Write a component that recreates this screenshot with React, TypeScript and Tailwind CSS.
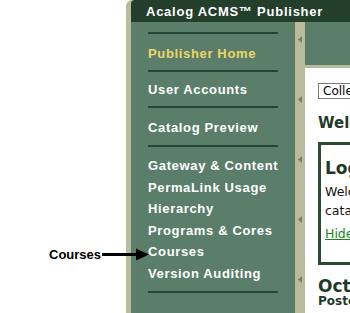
const navSans = { fontFamily: '"Liberation Sans", Arial, sans-serif' };
const verdana = { fontFamily: '"DejaVu Sans", Verdana, sans-serif' };

function Divider() {
  return <div className="ml-[17px] h-[2px] w-[130px] bg-[#27462f]" />;
}

function Notch() {
  return (
    <svg width="4" height="7" viewBox="0 0 4 7" aria-hidden="true" className="ml-[3px] shrink-0">
      <path d="M4 0 L0 3.5 L4 7Z" fill="#6e8069" />
    </svg>
  );
}

export default function App() {
  const group = ['Gateway & Content', 'PermaLink Usage', 'Hierarchy', 'Programs & Cores', 'Courses', 'Version Auditing'];

  return (
    <div className="relative flex h-[313px] w-[350px] overflow-hidden bg-white">
      {/* left margin of the screenshot (callout lives here) */}
      <div className="w-[126px] shrink-0" />

      {/* ACMS frame */}
      <div className="flex flex-1 flex-col rounded-tl-[6px] bg-[#b9bb9c] pl-[5px]">
        <div
          className="flex h-[22px] shrink-0 items-center rounded-tl-[4px] bg-[#233f2c] pt-[1px] pl-[15px] text-[13px] font-bold tracking-[0.75px] whitespace-nowrap text-white"
          style={navSans}
        >
          Acalog ACMS™ Publisher
        </div>

        <div className="flex flex-1">
          {/* Sidebar */}
          <nav className="w-[164px] shrink-0 bg-[#5a7e6a] pt-[10px] text-[13px] font-bold tracking-[0.65px] whitespace-nowrap text-white" style={navSans}>
            <Divider />
            <div className="flex h-[36px] items-center pt-[3px] pl-[17px] text-[#ecd667]">Publisher Home</div>
            <Divider />
            <div className="flex h-[34px] items-center pt-[2px] pl-[17px]">User Accounts</div>
            <Divider />
            <div className="flex h-[37px] items-center pt-[2px] pl-[17px]">Catalog Preview</div>
            <Divider />
            <ul className="pt-[8px] pb-[6px] pl-[17px] leading-[21.6px]">
              {group.map((g) => (
                <li key={g}>{g}</li>
              ))}
            </ul>
            <Divider />
          </nav>

          {/* collapse strip */}
          <div className="flex w-[10px] shrink-0 flex-col gap-[53px] pt-[14px]">
            <Notch />
            <Notch />
            <Notch />
            <Notch />
            <Notch />
          </div>

          {/* Content */}
          <div className="flex flex-1 flex-col">
            <div className="h-[43px] shrink-0 bg-[#5a7e6a]" />
            <div className="mt-[3px] flex-1 bg-white pl-[13px]" style={verdana}>
              <div className="w-[300px]">
                <div className="mt-[15px] flex h-[16px] w-[200px] items-center border border-[#7a7a7a] pl-[4px] text-[12px] leading-none text-black">
                  College Catalog
                </div>
                <h2 className="mt-[14px] text-[15px] leading-[20px] font-bold text-[#1f3a2a]">Welcome</h2>
                <div className="mt-[9px] border-[3px] border-[#2b4a35] px-[4px] pt-[12px] pb-[19px]">
                  <h3 className="text-[17px] leading-[22px] font-bold text-[#1f3a2a]">Login</h3>
                  <p className="mt-[3px] text-[12.5px] leading-[19px] text-[#111]">
                    Welcome to the
                    <br />
                    catalog management
                  </p>
                  <a className="mt-[4px] block text-[12.5px] leading-[19px] text-[#168a16] underline">Hide this</a>
                </div>
                <h3 className="mt-[13px] text-[17px] leading-[17px] font-bold text-[#1f3a2a]">October</h3>
                <div className="text-[12px] leading-[13px] font-bold text-[#1f3a2a]">Posted by</div>
              </div>
            </div>
          </div>
        </div>
      </div>

      {/* "Courses" callout */}
      <div className="absolute top-[245px] left-[49px] flex items-center" style={navSans}>
        <span className="text-[13px] font-bold text-black">Courses</span>
        <svg width="48" height="15" viewBox="0 0 48 15" aria-hidden="true" className="ml-[1px]">
          <line x1="0" y1="7.5" x2="36" y2="7.5" stroke="#000" strokeWidth="3" />
          <path d="M34 1.5 L47 7.5 L34 13.5Z" fill="#000" />
        </svg>
      </div>
    </div>
  );
}
